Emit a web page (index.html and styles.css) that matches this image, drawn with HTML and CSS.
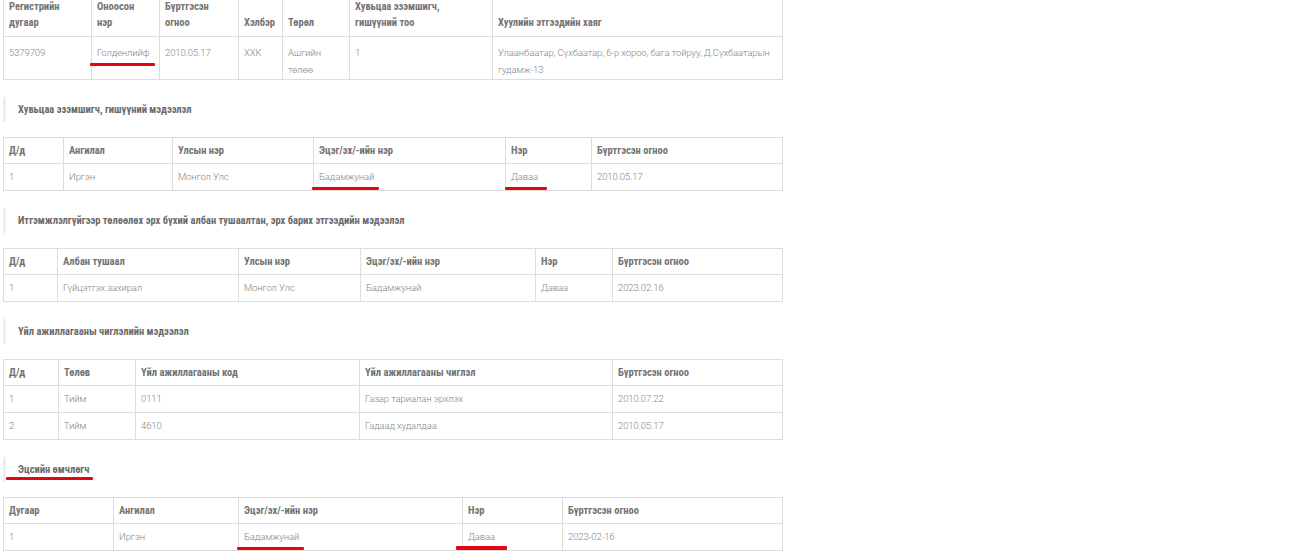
FILE: index.html
```html
<!DOCTYPE html>
<html lang="mn">
<head>
<meta charset="utf-8">
<title>Компанийн мэдээлэл</title>
<link rel="stylesheet" href="styles.css">
</head>
<body>
<div class="wrap">
  <table class="tbl t1">
    <colgroup><col class="c1"><col class="c2"><col class="c3"><col class="c4"><col class="c5"><col class="c6"><col class="c7"></colgroup>
    <thead>
      <tr>
        <th>Регистрийн<br>дугаар</th>
        <th>Оноосон<br>нэр</th>
        <th>Бүртгэсэн<br>огноо</th>
        <th>Хэлбэр</th>
        <th>Төрөл</th>
        <th>Хувьцаа эзэмшигч,<br>гишүүний тоо</th>
        <th>Хуулийн этгээдийн хаяг</th>
      </tr>
    </thead>
    <tbody>
      <tr>
        <td>5379709</td>
        <td><span class="mark">Голденлийф</span></td>
        <td>2010.05.17</td>
        <td>ХХК</td>
        <td>Ашгийн<br>төлөө</td>
        <td>1</td>
        <td>Улаанбаатар, Сүхбаатар, 6-р хороо, бага тойруу, Д.Сүхбаатарын гудамж-13</td>
      </tr>
    </tbody>
  </table>

  <h4 class="sec">Хувьцаа эзэмшигч, гишүүний мэдээлэл</h4>
  <table class="tbl t2">
    <colgroup><col class="c1"><col class="c2"><col class="c3"><col class="c4"><col class="c5"><col class="c6"></colgroup>
    <thead><tr><th>Д/д</th><th>Ангилал</th><th>Улсын нэр</th><th>Эцэг/эх/-ийн нэр</th><th>Нэр</th><th>Бүртгэсэн огноо</th></tr></thead>
    <tbody><tr><td>1</td><td>Иргэн</td><td>Монгол Улс</td><td><span class="mark">Бадамжунай</span></td><td><span class="mark mark-short">Даваа</span></td><td>2010.05.17</td></tr></tbody>
  </table>

  <h4 class="sec">Итгэмжлэлгүйгээр төлөөлөх эрх бүхий албан тушаалтан, эрх барих этгээдийн мэдээлэл</h4>
  <table class="tbl t3">
    <colgroup><col class="c1"><col class="c2"><col class="c3"><col class="c4"><col class="c5"><col class="c6"></colgroup>
    <thead><tr><th>Д/д</th><th>Албан тушаал</th><th>Улсын нэр</th><th>Эцэг/эх/-ийн нэр</th><th>Нэр</th><th>Бүртгэсэн огноо</th></tr></thead>
    <tbody><tr><td>1</td><td>Гүйцэтгэх захирал</td><td>Монгол Улс</td><td>Бадамжунай</td><td>Даваа</td><td>2023.02.16</td></tr></tbody>
  </table>

  <h4 class="sec">Үйл ажиллагааны чиглэлийн мэдээлэл</h4>
  <table class="tbl t4">
    <colgroup><col class="c1"><col class="c2"><col class="c3"><col class="c4"><col class="c5"></colgroup>
    <thead><tr><th>Д/д</th><th>Төлөв</th><th>Үйл ажиллагааны код</th><th>Үйл ажиллагааны чиглэл</th><th>Бүртгэсэн огноо</th></tr></thead>
    <tbody>
      <tr><td>1</td><td>Тийм</td><td>0111</td><td>Газар тариалан эрхлэх</td><td>2010.07.22</td></tr>
      <tr><td>2</td><td>Тийм</td><td>4610</td><td>Гадаад худалдаа</td><td>2010.05.17</td></tr>
    </tbody>
  </table>

  <h4 class="sec"><span class="mark mark-sec">Эцсийн өмчлөгч</span></h4>
  <table class="tbl t5">
    <colgroup><col class="c1"><col class="c2"><col class="c3"><col class="c4"><col class="c5"></colgroup>
    <thead><tr><th>Дугаар</th><th>Ангилал</th><th>Эцэг/эх/-ийн нэр</th><th>Нэр</th><th>Бүртгэсэн огноо</th></tr></thead>
    <tbody><tr><td>1</td><td>Иргэн</td><td><span class="mark">Бадамжунай</span></td><td><span class="mark mark-thick">Даваа</span></td><td>2023-02-16</td></tr></tbody>
  </table>
</div>
</body>
</html>
```
FILE: styles.css
```css
html, body {
  margin: 0;
  padding: 0;
  background: #fff;
}
body {
  font-family: Roboto, "Liberation Sans", sans-serif;
  color: #888888;
  overflow: hidden;
}
.wrap {
  width: 779px;
  margin-left: 3px;
}
.tbl {
  width: 779px;
  border-collapse: collapse;
  table-layout: fixed;
  border: 1px solid #dddddd;
}
.t1 {
  margin-top: -2px;
}
.tbl th,
.tbl td {
  border: 1px solid #dddddd;
  text-align: left;
  line-height: 16px;
}
.tbl th {
  padding: 5px 5px 4px 5px;
  font-family: "Roboto Condensed", "Liberation Sans Narrow", "DejaVu Sans Condensed", Roboto, sans-serif;
  font-stretch: condensed;
  font-weight: 700;
  font-size: 10.5px;
  color: #737373;
  vertical-align: bottom;
}
.tbl td {
  padding: 5px 5px 5px 5px;
  font-size: 9.5px;
  letter-spacing: -0.1px;
  font-weight: 300;
  color: #858585;
  vertical-align: top;
}
.t1 th {
  padding: 0 5px 5px 5px;
}
.t1 td {
  padding: 7px 5px 1px 5px;
  line-height: 17px;
}

.t1 .c1 { width: 88px; }
.t1 .c2 { width: 68px; }
.t1 .c3 { width: 79px; }
.t1 .c4 { width: 44px; }
.t1 .c5 { width: 67px; }
.t1 .c6 { width: 143px; }
.t1 .c7 { width: 290px; }

.t2 .c1 { width: 60px; }
.t2 .c2 { width: 109px; }
.t2 .c3 { width: 141px; }
.t2 .c4 { width: 192px; }
.t2 .c5 { width: 86px; }
.t2 .c6 { width: 191px; }

.t3 .c1 { width: 54px; }
.t3 .c2 { width: 181px; }
.t3 .c3 { width: 122px; }
.t3 .c4 { width: 175px; }
.t3 .c5 { width: 77px; }
.t3 .c6 { width: 170px; }

.t4 .c1 { width: 55px; }
.t4 .c2 { width: 77px; }
.t4 .c3 { width: 224px; }
.t4 .c4 { width: 253px; }
.t4 .c5 { width: 170px; }

.t5 .c1 { width: 110px; }
.t5 .c2 { width: 125px; }
.t5 .c3 { width: 224px; }
.t5 .c4 { width: 100px; }
.t5 .c5 { width: 220px; }

.sec {
  margin: 17px 0 15px 0;
  height: 25px;
  line-height: 25px;
  border-left: 3px solid #eeeeee;
  padding-left: 12px;
  font-family: "Roboto Condensed", "Liberation Sans Narrow", "DejaVu Sans Condensed", Roboto, sans-serif;
  font-stretch: condensed;
  font-weight: 700;
  font-size: 10.5px;
  color: #6b6b6b;
}

.mark {
  position: relative;
  display: inline-block;
}
.mark::after {
  content: "";
  position: absolute;
  left: -7px;
  right: -5px;
  bottom: -5px;
  height: 3px;
  border-radius: 1px;
  background: #e3060f;
}
.mark-short::after {
  left: -6px;
  right: -9px;
}
.mark-sec::after {
  left: -12px;
  right: -4px;
  bottom: 2px;
}
.mark-thick::after {
  left: -12px;
  right: -12px;
  height: 4px;
}
```
